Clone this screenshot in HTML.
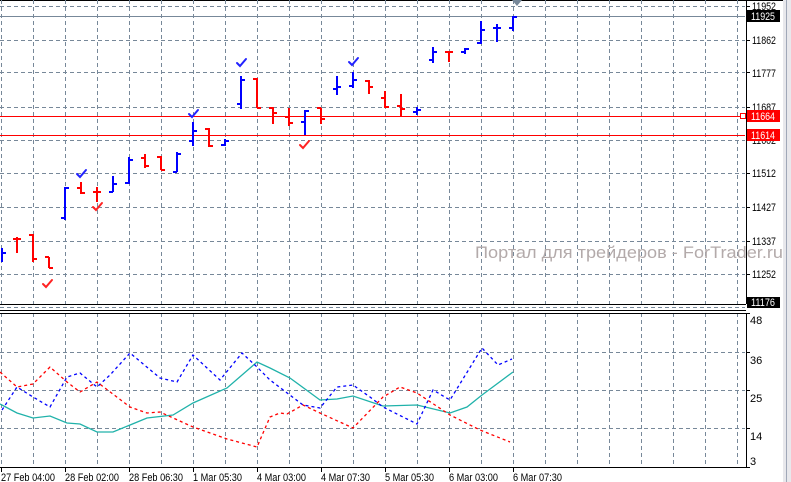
<!DOCTYPE html>
<html><head><meta charset="utf-8"><style>
html,body{margin:0;padding:0;background:#fff;width:791px;height:482px;overflow:hidden}
svg{display:block}
text{font-family:"Liberation Sans",sans-serif;font-size:11px}
</style></head><body>
<svg width="791" height="482" xmlns="http://www.w3.org/2000/svg">
<rect width="791" height="482" fill="#fff"/>
<line x1="0" y1="0.5" x2="791" y2="0.5" stroke="#000"/>
<g stroke="#778899" stroke-dasharray="4,3" stroke-width="1" fill="none">
<path d="M0 6.5H745M0 40.5H745M0 72.5H745M0 107.5H745M0 140.5H745M0 173.5H745M0 207.5H745M0 241.5H745M0 274.5H745M0 307.5H745M0 352.5H745M0 390.5H745M0 428.5H745"/>
<path d="M1.5 0V304M33.5 0V304M65.5 0V304M97.5 0V304M129.5 0V304M161.5 0V304M193.5 0V304M225.5 0V304M257.5 0V304M289.5 0V304M321.5 0V304M353.5 0V304M385.5 0V304M417.5 0V304M449.5 0V304M481.5 0V304M513.5 0V304M545.5 0V304M577.5 0V304M609.5 0V304M641.5 0V304M673.5 0V304M705.5 0V304M737.5 0V304"/>
<path d="M1.5 313V467M33.5 313V467M65.5 313V467M97.5 313V467M129.5 313V467M161.5 313V467M193.5 313V467M225.5 313V467M257.5 313V467M289.5 313V467M321.5 313V467M353.5 313V467M385.5 313V467M417.5 313V467M449.5 313V467M481.5 313V467M513.5 313V467M545.5 313V467M577.5 313V467M609.5 313V467M641.5 313V467M673.5 313V467M705.5 313V467M737.5 313V467"/>
</g>
<line x1="0" y1="16.5" x2="745" y2="16.5" stroke="#778899"/>
<line x1="0" y1="116.5" x2="745" y2="116.5" stroke="#f00"/>
<line x1="0" y1="135.5" x2="745" y2="135.5" stroke="#f00"/>
<rect x="740.5" y="113.5" width="5" height="5" fill="#fff" stroke="#f00"/>
<text x="475" y="258" fill="#b3aaaa" style="font-size:17px" textLength="308" lengthAdjust="spacingAndGlyphs">Портал для трейдеров - ForTrader.ru</text>
<g stroke="#000" fill="none">
<path d="M0 304.5H746M0 310.5H746M0 313.5H746M0 467.5H746M746.5 0V304M746.5 313V467"/>
</g>
<g stroke-width="2" fill="none">
<g stroke="#00f">
<path d="M2 248V262M2 253H6"/>
<path d="M65 187V220M61 218H65M65 188H69"/>
<path d="M113 176V192M109 192H113M113 184H117"/>
<path d="M129 157V184M125 183H129M129 160H133"/>
<path d="M177 152V172M173 172H177M177 154H181"/>
<path d="M193 122V146M189 141H193M193 131H197"/>
<path d="M225 139V146M221 145H225M225 141H229"/>
<path d="M241 76V109M237 104H241M241 80H245"/>
<path d="M305 110V135M301 122H305M305 111H309"/>
<path d="M337 76V95M333 89H337M337 87H341"/>
<path d="M353 72V88M349 86H353M353 80H357"/>
<path d="M417 107V115M413 112H417M417 110H421"/>
<path d="M433 47V63M429 60H433M433 52H437"/>
<path d="M465 48V54M461 52H465M465 49H469"/>
<path d="M481 21V44M477 43H481M481 30H485"/>
<path d="M497 24V42M493 28H497M497 28H501"/>
<path d="M513 16V31M509 28H513M513 17H517"/>
</g>
<g stroke="#f00">
<path d="M17 237V253M13 239H17M17 239H21"/>
<path d="M33 234V262M29 235H33M33 259H37"/>
<path d="M49 257V268M45 257H49M49 268H53"/>
<path d="M81 182V194M77 188H81M81 193H85"/>
<path d="M97 187V202M93 192H97M97 192H101"/>
<path d="M145 154V168M141 158H145M145 166H149"/>
<path d="M161 156V170M157 157H161M161 170H165"/>
<path d="M209 128V147M205 129H209M209 146H213"/>
<path d="M257 78V108M253 79H257M257 108H261"/>
<path d="M273 107V124M269 108H273M273 113H277"/>
<path d="M289 108V126M285 117H289M289 123H293"/>
<path d="M321 108V124M317 108H321M321 119H325"/>
<path d="M369 80V94M365 81H369M369 87H373"/>
<path d="M385 91V108M381 98H385M385 107H389"/>
<path d="M401 94V116M397 106H401M401 109H405"/>
<path d="M449 52V62M445 52H449M449 52H453"/>
</g>
</g>
<g fill="none" stroke-width="2" stroke-linecap="round">
<g stroke="#22f">
<path d="M189 114L192 117L198 110"/>
<path d="M237 63L240 66L246 59"/>
<path d="M77 174L80 177L86 170"/>
<path d="M349 62L352 65L358 58"/>
</g>
<g stroke="#f22">
<path d="M43 284L46 287L52 280"/>
<path d="M93 207L96 210L102 203"/>
<path d="M300 145L303 148L309 141"/>
</g>
</g>
<path d="M512 0H522L517 6Z" fill="#778899"/>
<g fill="none" stroke-width="1.3">
<polyline stroke="#20b2aa" points="0,404 17,413 33,418 50,416 67,423 80,424 97,432 113,432 147,418 173,415 193,403 227,388 257,362 270,368 290,378 320,400 337,399 353,396 383,406 417,405 450,413 467,407 482,395 513,372"/>
<polyline stroke="#00f" stroke-dasharray="3,3" points="2,410 17,387 33,397 50,407 67,377 80,373 97,387 110,375 130,353 160,378 177,382 193,355 220,380 242,353 257,367 270,380 303,405 320,408 337,387 353,385 370,397 383,407 417,424 433,390 450,400 482,348 498,365 512,359"/>
<polyline stroke="#f00" stroke-dasharray="3,3" points="0,372 17,387 33,384 50,367 67,382 80,392 97,382 130,407 147,413 160,412 193,427 227,439 257,447 270,417 280,413 287,414 303,405 320,413 353,428 383,397 400,387 417,393 450,415 480,430 510,442"/>
</g>
<g stroke="#000">
<path d="M746 6.5H750M746 40.5H750M746 72.5H750M746 107.5H750M746 140.5H750M746 173.5H750M746 207.5H750M746 241.5H750M746 274.5H750M746 313.5H750M746 352.5H750M746 390.5H750M746 428.5H750M746 467.5H750"/>
<path d="M1.5 467V472M65.5 467V472M129.5 467V472M193.5 467V472M257.5 467V472M321.5 467V472M385.5 467V472M449.5 467V472M513.5 467V472"/>
</g>
<g fill="#000">
<text x="752" y="10" textLength="24" lengthAdjust="spacingAndGlyphs">11952</text>
<text x="752" y="44" textLength="24" lengthAdjust="spacingAndGlyphs">11862</text>
<text x="752" y="77" textLength="24" lengthAdjust="spacingAndGlyphs">11777</text>
<text x="752" y="111" textLength="24" lengthAdjust="spacingAndGlyphs">11687</text>
<text x="752" y="144" textLength="24" lengthAdjust="spacingAndGlyphs">11602</text>
<text x="752" y="177" textLength="24" lengthAdjust="spacingAndGlyphs">11512</text>
<text x="752" y="211" textLength="24" lengthAdjust="spacingAndGlyphs">11427</text>
<text x="752" y="245" textLength="24" lengthAdjust="spacingAndGlyphs">11337</text>
<text x="752" y="278" textLength="24" lengthAdjust="spacingAndGlyphs">11252</text>
<text x="750" y="324">48</text>
<text x="750" y="364">36</text>
<text x="750" y="402">25</text>
<text x="750" y="440">14</text>
<text x="750" y="465">3</text>
</g>
<rect x="747" y="10" width="33" height="12" fill="#000"/><text x="751" y="20" fill="#fff" textLength="24" lengthAdjust="spacingAndGlyphs">11925</text>
<rect x="747" y="110" width="33" height="12" fill="#f00"/><text x="751" y="120" fill="#fff" textLength="24" lengthAdjust="spacingAndGlyphs">11664</text>
<rect x="747" y="129" width="33" height="12" fill="#f00"/><text x="751" y="139" fill="#fff" textLength="24" lengthAdjust="spacingAndGlyphs">11614</text>
<rect x="747" y="297" width="33" height="11" fill="#000"/><text x="751" y="306" fill="#fff" textLength="24" lengthAdjust="spacingAndGlyphs">11176</text>
<g fill="#000">
<text x="1" y="481" textLength="54" lengthAdjust="spacingAndGlyphs">27 Feb 04:00</text>
<text x="65" y="481" textLength="54" lengthAdjust="spacingAndGlyphs">28 Feb 02:00</text>
<text x="129" y="481" textLength="54" lengthAdjust="spacingAndGlyphs">28 Feb 06:30</text>
<text x="193" y="481" textLength="49" lengthAdjust="spacingAndGlyphs">1 Mar 05:30</text>
<text x="257" y="481" textLength="49" lengthAdjust="spacingAndGlyphs">4 Mar 03:00</text>
<text x="321" y="481" textLength="49" lengthAdjust="spacingAndGlyphs">4 Mar 07:30</text>
<text x="385" y="481" textLength="49" lengthAdjust="spacingAndGlyphs">5 Mar 05:30</text>
<text x="449" y="481" textLength="49" lengthAdjust="spacingAndGlyphs">6 Mar 03:00</text>
<text x="513" y="481" textLength="49" lengthAdjust="spacingAndGlyphs">6 Mar 07:30</text>
</g>
<rect x="783" y="0" width="8" height="482" fill="#e8e8ec"/>
<line x1="786.5" y1="0" x2="786.5" y2="482" stroke="#a0a8b8"/>
</svg>
</body></html>
